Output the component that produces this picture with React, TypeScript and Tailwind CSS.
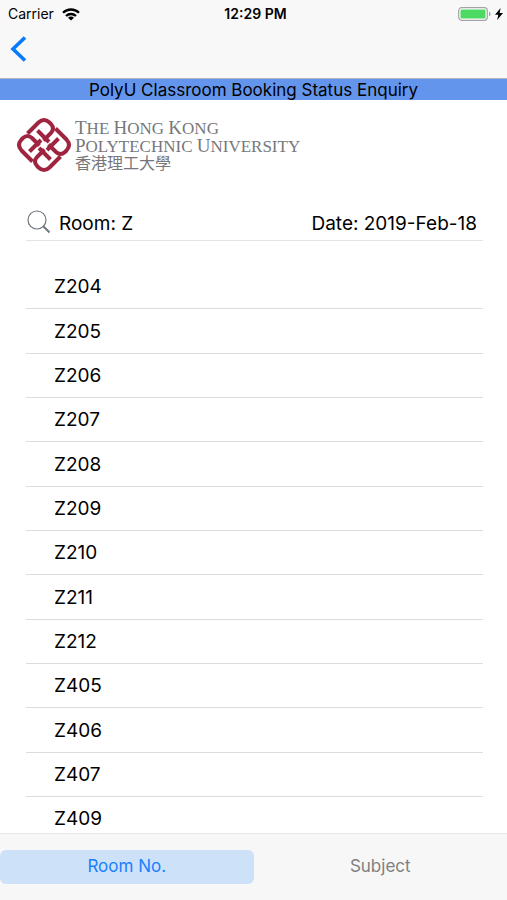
import { useState } from 'react';

const ROOMS = ['Z204', 'Z205', 'Z206', 'Z207', 'Z208', 'Z209', 'Z210', 'Z211', 'Z212', 'Z405', 'Z406', 'Z407', 'Z409'];
const TABS = ['Room No.', 'Subject'];

function StatusBar() {
  return (
    <div className="grid grid-cols-3 items-center h-7 pl-2 pr-1 text-sm text-black">
      <div className="flex items-center gap-2">
        <span>Carrier</span>
        <svg viewBox="0 0 18 13" className="w-[18px] h-[13px]" fill="none" stroke="currentColor" strokeWidth="2.3">
          <path d="M1 4.8a11.4 11.4 0 0 1 16 0" />
          <path d="M4 8a7.2 7.2 0 0 1 10 0" />
          <path d="M9 12.6 6 9.8a4.2 4.2 0 0 1 6 0z" fill="currentColor" stroke="none" />
        </svg>
      </div>
      <span className="text-center font-semibold">12:29 PM</span>
      <div className="flex items-center justify-end gap-1">
        <svg viewBox="0 0 33 14" className="w-[33px] h-[14px]">
          <rect x="0.7" y="0.7" width="28.6" height="12.6" rx="3" fill="#fff" stroke="#a3a3a3" strokeWidth="1.2" />
          <rect x="2.5" y="2.5" width="25" height="9" rx="1.2" fill="#4cd964" />
          <path d="M31 4.5c2 .7 2 4.3 0 5z" fill="#a3a3a3" />
        </svg>
        <svg viewBox="0 0 8 12" className="w-2 h-3" fill="currentColor">
          <path d="M5.6 0 0 6.8h3.3L2.2 12 8 5H4.6z" />
        </svg>
      </div>
    </div>
  );
}

function PolyULogo() {
  return (
    <svg viewBox="0 0 56 56" className="w-14 h-14 shrink-0" fill="none" stroke="#9f2440" strokeWidth="4">
      {[0, 90, 180, 270].map(angle => (
        <path
          key={angle}
          transform={`rotate(${angle} 28 28)`}
          d="M11.5 16.5 22.5 5.5q5.5-5 11 0l1.5 1.5q4 4.5 0 9l-7.500 7.500M21.500 13.500 33 25"
        />
      ))}
    </svg>
  );
}

export default function App() {
  const [tab, setTab] = useState(TABS[0]);

  return (
    <div className="flex flex-col min-h-screen bg-white font-[Inter,'Liberation_Sans',sans-serif] text-black">
      <header className="bg-[#f8f8f8]">
        <StatusBar />
        <nav className="flex items-center h-[50px] pb-2 pl-2">
          <button aria-label="Back" className="text-[#087aff]">
            <svg viewBox="0 0 20 28" className="w-5 h-7" fill="none" stroke="currentColor" strokeWidth="3.6">
              <path d="M17 2.5 5 14l12 11.5" />
            </svg>
          </button>
        </nav>
        <h1 className="h-[22px] leading-[22px] bg-[#6495ed] border-t border-[#b0b5c0] text-center text-[17px]">
          PolyU Classroom Booking Status Enquiry
        </h1>
      </header>

      <main className="flex flex-col flex-1">
        <div className="flex items-center gap-[3px] h-[90px] pl-4">
          <PolyULogo />
          <div className="font-['Liberation_Serif','Noto_Sans_CJK_TC',serif] text-[#77777b] text-[17px] leading-[17px]">
            <p><span className="text-[19px]">T</span>HE <span className="text-[19px]">H</span>ONG <span className="text-[19px]">K</span>ONG</p>
            <p><span className="text-[19px]">P</span>OLYTECHNIC <span className="text-[19px]">U</span>NIVERSITY</p>
            <p className="text-base leading-[17px]">香港理工大學</p>
          </div>
        </div>

        <div className="flex items-end justify-between ml-[26px] mr-6 h-[51px] pb-0.5 border-b border-[#e4e4e4] text-[19px]">
          <button className="flex items-center gap-[9px]">
            <svg viewBox="0 0 24 24" className="w-6 h-6 mb-1" fill="none" stroke="#6f767c">
              <circle cx="11" cy="10" r="9" strokeWidth="1.2" />
              <path d="m17 16 6.5 6.5" strokeWidth="2" />
            </svg>
            <span>Room: Z</span>
          </button>
          <button className="pr-[6px]">Date: 2019-Feb-18</button>
        </div>

        <ul className="flex flex-col flex-1 ml-[26px] mr-6 pt-6 text-[19px]">
          {ROOMS.map(room => (
            <li key={room} className="flex flex-1 min-h-9 items-center pt-0.5 pl-7 border-b border-[#dcdcdc] last:flex-none last:h-9 last:pt-2 last:border-b-0">
              {room}
            </li>
          ))}
        </ul>
      </main>

      <footer className="grid grid-cols-2 items-center h-[67px] bg-[#f7f7f7] border-t border-[#e8e8e8]">
        {TABS.map(name => (
          <button
            key={name}
            onClick={() => setTab(name)}
            className={`h-[34px] rounded-md text-[17px] ${tab === name ? 'bg-[#cde1f9] text-[#1a80ff]' : 'text-[#808080]'}`}
          >
            {name}
          </button>
        ))}
      </footer>
    </div>
  );
}
